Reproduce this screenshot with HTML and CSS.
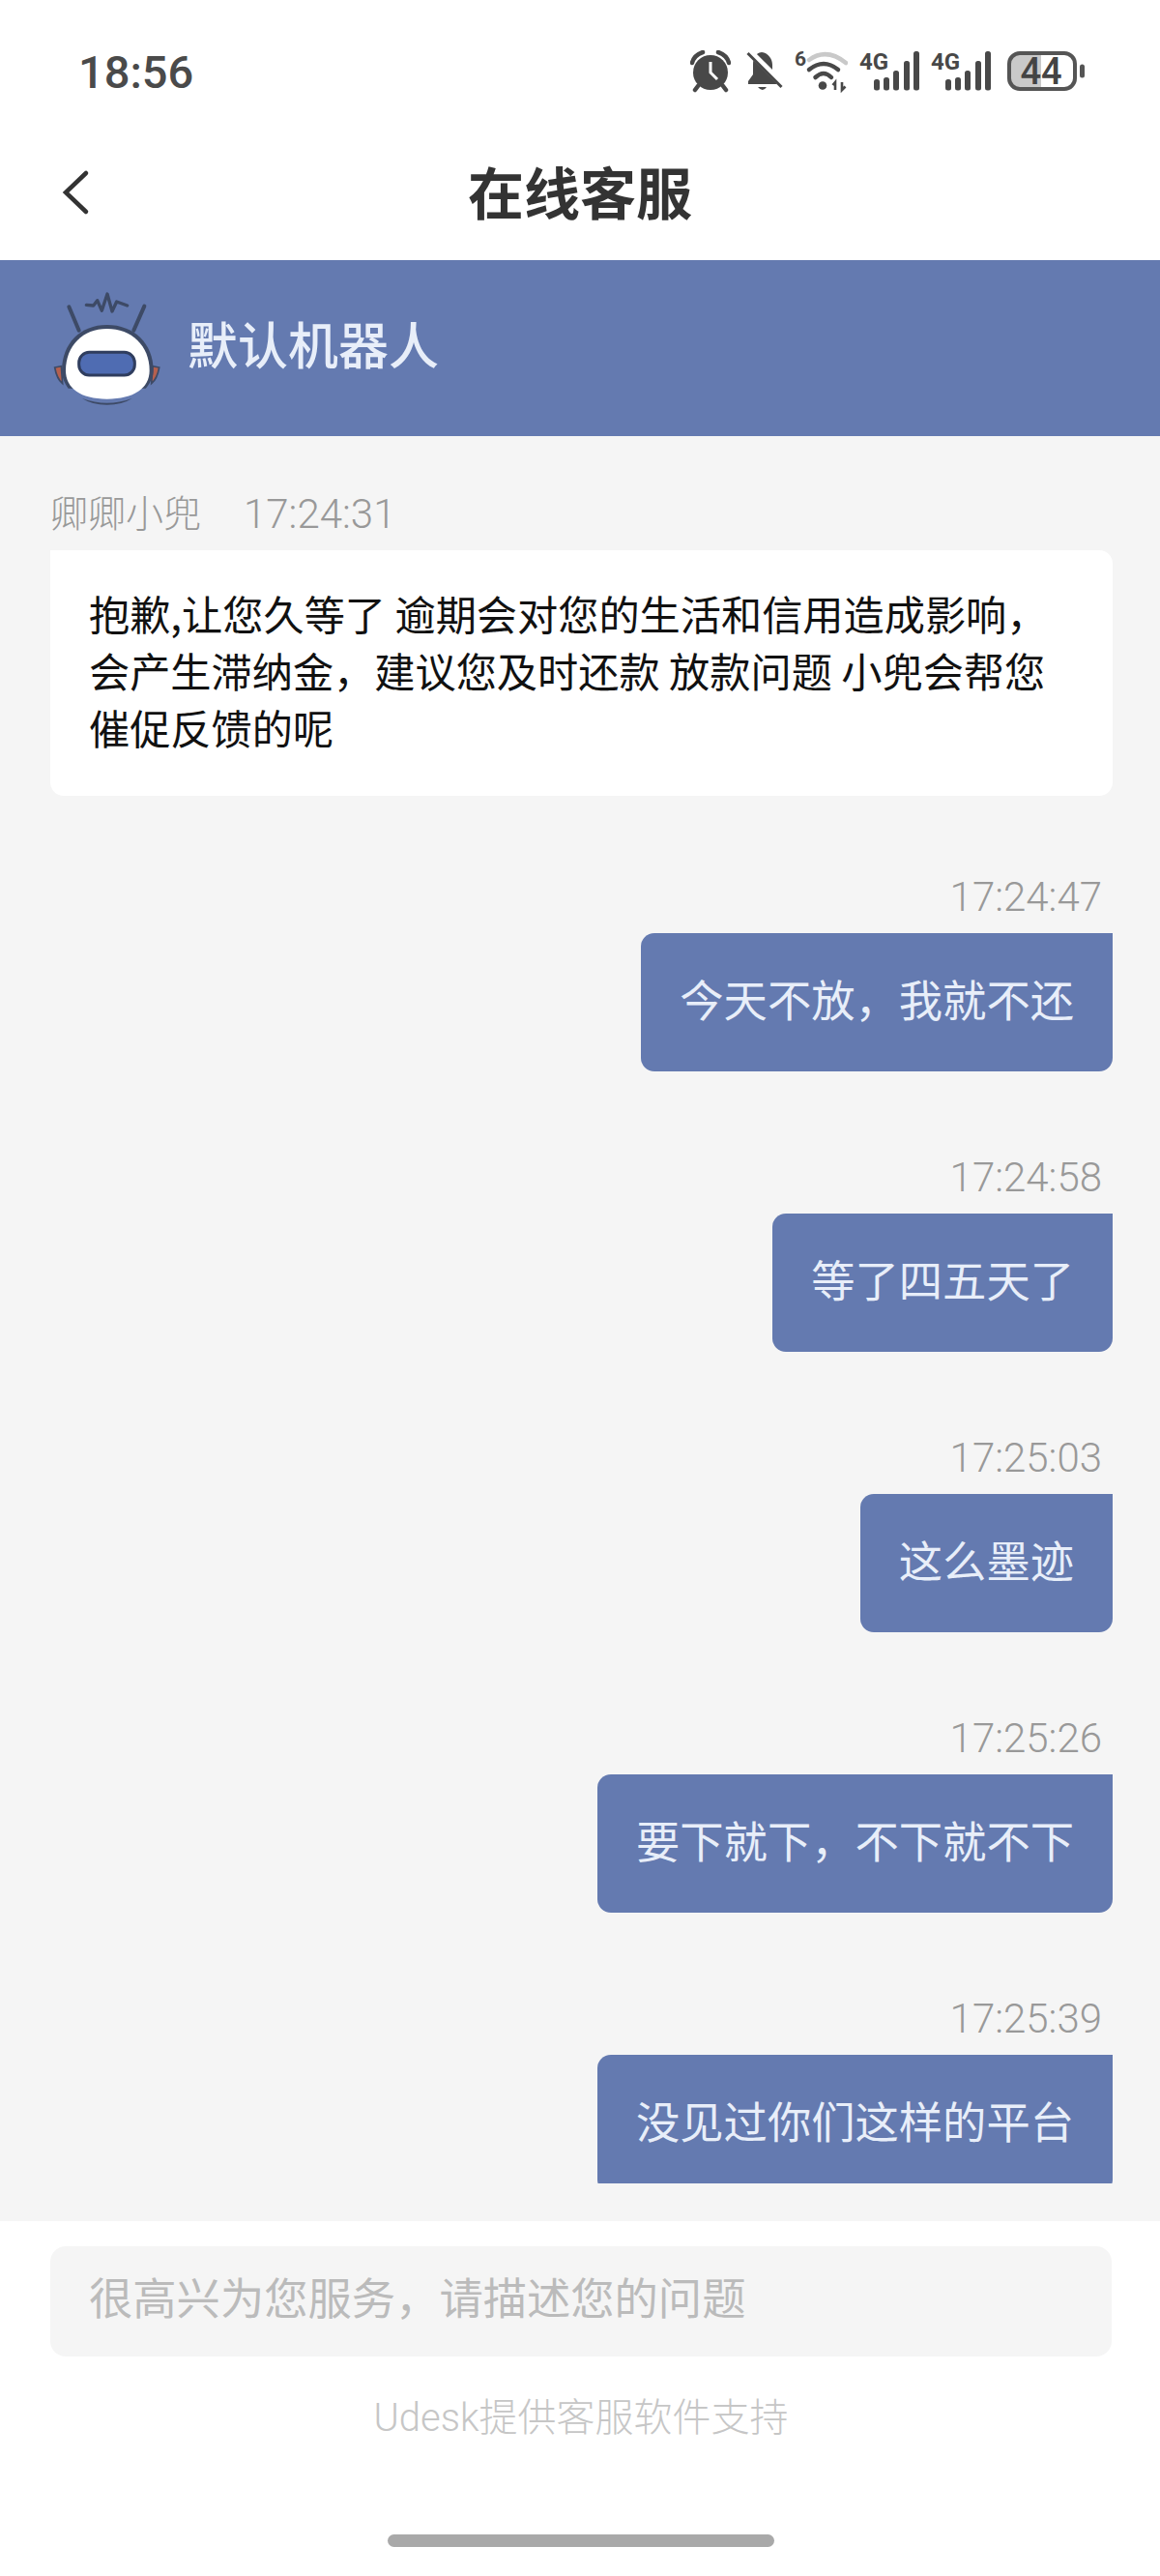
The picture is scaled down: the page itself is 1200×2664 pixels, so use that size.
FILE: index.html
```html
<!DOCTYPE html>
<html lang="zh-CN">

<head>
    <meta charset="UTF-8">
    <title>在线客服</title>
    <link rel="stylesheet" href="styles.css">
</head>

<body>
<div class="app">
    <div class="status">
        <span class="clock">18:56</span>
        <div class="status-icons">
            <svg class="ic-alarm" width="42" height="44" viewBox="0 0 42 44">
                <circle cx="21" cy="23" r="18" fill="#484848"/>
                <path d="M2 13 Q4 5 13 2 M40 13 Q38 5 29 2 M8 37 L5 41 M34 37 L37 41" fill="none" stroke="#484848" stroke-width="4.500" stroke-linecap="round"/>
                <path d="M21 12 V23 L28 30" fill="none" stroke="#fff" stroke-width="3"/>
            </svg>
            <svg class="ic-bell" width="38" height="44" viewBox="0 0 38 44">
                <path d="M16 2 C9 3 7 9 7 15 V25 L2 32 V35 H31 V32 L27 25 V15 C27 9 23 3 16 2 Z" fill="#484848"/>
                <path d="M12 38 H21 Q17 44 12 38 Z" fill="#484848"/>
                <path d="M3 1 L38 36" stroke="#fff" stroke-width="7"/>
                <path d="M1.500 3 L36.500 38" stroke="#484848" stroke-width="3"/>
            </svg>
            <svg class="ic-wifi" width="55" height="56" viewBox="0 -6 55 56">
                <text x="0" y="16" class="ic-label-small">6</text>
                <path d="M15 10 Q33 -3 53 13" fill="none" stroke="#c9c9c9" stroke-width="4.500" stroke-linecap="round"/>
                <path d="M15 20 Q30 8 45 20" fill="none" stroke="#484848" stroke-width="4.500" stroke-linecap="round"/>
                <path d="M21.500 28 Q30 20 38 28" fill="none" stroke="#484848" stroke-width="4.500" stroke-linecap="round"/>
                <circle cx="29" cy="36.500" r="4.300" fill="#484848"/>
                <path d="M42 41 V33 L39.500 36 M49 33 V41 L52.500 37.500" fill="none" stroke="#484848" stroke-width="2.600"/>
            </svg>
            <svg class="ic-signal" width="62" height="56" viewBox="0 -6 62 56">
                <text x="0" y="20" class="ic-label">4G</text>
                <rect x="15" y="30" width="6" height="11.500" rx="2.500" fill="#484848"/>
                <rect x="25" y="28" width="6" height="13.500" rx="2.500" fill="#484848"/>
                <rect x="35" y="21" width="6" height="20.500" rx="2.500" fill="#484848"/>
                <rect x="46" y="11" width="6" height="30.500" rx="2.500" fill="#484848"/>
                <rect x="56" y="1" width="6" height="40.500" rx="2.500" fill="#484848"/>
            </svg>
            <svg class="ic-signal" width="62" height="56" viewBox="0 -6 62 56">
                <text x="0" y="20" class="ic-label">4G</text>
                <rect x="15" y="30" width="6" height="11.500" rx="2.500" fill="#484848"/>
                <rect x="25" y="28" width="6" height="13.500" rx="2.500" fill="#484848"/>
                <rect x="35" y="21" width="6" height="20.500" rx="2.500" fill="#484848"/>
                <rect x="46" y="11" width="6" height="30.500" rx="2.500" fill="#484848"/>
                <rect x="56" y="1" width="6" height="40.500" rx="2.500" fill="#484848"/>
            </svg>
            <svg class="ic-battery" width="80" height="44" viewBox="0 0 80 44">
                <path d="M35 3 H13 Q2 3 2 14 V29 Q2 40 13 40 H35 Z" fill="#c9c9c9"/>
                <rect x="2" y="3" width="68" height="37" rx="11" fill="none" stroke="#555" stroke-width="4"/>
                <rect x="75" y="14.500" width="5" height="14" rx="2.500" fill="#555"/>
                <text x="35" y="35" text-anchor="middle" class="ic-percent">44</text>
            </svg>
        </div>
    </div>

    <div class="nav">
        <svg class="back" width="40" height="60" viewBox="0 0 40 60">
            <path d="M29 9 L8 29 L29 49" fill="none" stroke="#333" stroke-width="4.500" stroke-linecap="round"/>
        </svg>
        <span class="nav-title">在线客服</span>
    </div>

    <div class="agent">
        <svg class="avatar" width="160" height="160" viewBox="0 0 480 480">
            <path d="M80 300 L100 296 L104 350 Q86 335 80 300 Z" fill="#b5604f" stroke="#3d4a66" stroke-width="5"/>
            <path d="M404 300 L384 296 L380 350 Q398 335 404 300 Z" fill="#b5604f" stroke="#3d4a66" stroke-width="5"/>
            <path d="M155 185 L124 112 M325 185 L358 110" stroke="#3d4a66" stroke-width="12" stroke-linecap="round"/>
            <path d="M178 106 L200 108 L212 92 L226 124 L243 72 L258 126 L272 96 L305 108" fill="none" stroke="#3d4a66" stroke-width="10" stroke-linejoin="round" stroke-linecap="round"/>
            <path d="M242 168 C160 168 102 225 102 310 C102 330 110 350 122 365 L362 365 C376 350 386 330 386 310 C386 225 325 168 242 168 Z" fill="#3d4a66"/>
            <path d="M242 180 C168 180 114 232 114 310 C114 365 160 398 242 398 C325 398 374 365 374 310 C374 232 318 180 242 180 Z" fill="#fff"/>
            <path d="M165 396 Q242 425 320 396 Q290 416 242 416 Q195 416 165 396 Z" fill="#3d4a66"/>
            <rect x="155" y="253" width="173" height="71" rx="32" fill="#4f6cb2" stroke="#2f3d5e" stroke-width="9"/>
        </svg>
        <span class="agent-name">默认机器人</span>
    </div>

    <div class="chat">
        <div class="chat-scroll">
            <div class="msg msg-in">
                <div class="meta"><span class="meta-name">卿卿小兜</span><span>17:24:31</span></div>
                <div class="bubble">抱歉,让您久等了 逾期会对您的生活和信用造成影响，会产生滞纳金，建议您及时还款 放款问题 小兜会帮您催促反馈的呢</div>
            </div>
            <div class="msg msg-out">
                <div class="meta">17:24:47</div>
                <div class="bubble">今天不放，我就不还</div>
            </div>
            <div class="msg msg-out">
                <div class="meta">17:24:58</div>
                <div class="bubble">等了四五天了</div>
            </div>
            <div class="msg msg-out">
                <div class="meta">17:25:03</div>
                <div class="bubble">这么墨迹</div>
            </div>
            <div class="msg msg-out">
                <div class="meta">17:25:26</div>
                <div class="bubble">要下就下，不下就不下</div>
            </div>
            <div class="msg msg-out">
                <div class="meta">17:25:39</div>
                <div class="bubble">没见过你们这样的平台</div>
            </div>
        </div>
    </div>

    <div class="footer">
        <input class="ask" type="text" placeholder="很高兴为您服务，请描述您的问题">
        <div class="powered">Udesk提供客服软件支持</div>
        <div class="home-bar"></div>
    </div>
</div>
</body>
</html>
```

FILE: styles.css
```css
html, body {
    margin: 0;
    padding: 0;
}
body {
    background-color: #FFFFFF;
    font-family: Roboto, "Noto Sans CJK SC", sans-serif;
}
.app {
    width: 1200px;
    height: 2664px;
    display: flex;
    flex-direction: column;
    overflow: hidden;
}

/* status bar */
.status {
    height: 112px;
    padding: 18px 78px 0 81px;
    display: flex;
    align-items: center;
    justify-content: space-between;
}
.clock {
    font-size: 47px;
    font-weight: 500;
    color: #4A4A4A;
}
.status-icons {
    display: flex;
    align-items: center;
}
.ic-alarm { margin-right: 16px; }
.ic-bell { margin-right: 12px; }
.ic-wifi { margin-right: 12px; }
.ic-signal { margin-right: 12px; }
.ic-signal + .ic-battery { margin-left: 5px; }
.ic-label {
    font-family: Roboto, sans-serif;
    font-size: 24px;
    font-weight: 700;
    fill: #484848;
}
.ic-label-small {
    font-family: Roboto, sans-serif;
    font-size: 21px;
    font-weight: 700;
    fill: #484848;
}
.ic-percent {
    font-family: Roboto, sans-serif;
    font-size: 38px;
    font-weight: 500;
    fill: #444444;
}

/* title */
.nav {
    height: 133px;
    padding-bottom: 6px;
    position: relative;
    display: flex;
    align-items: center;
    justify-content: center;
}
.back {
    position: absolute;
    left: 60px;
    top: 40px;
}
.nav-title {
    font-size: 58px;
    font-weight: 700;
    color: #333333;
}

/* robot band */
.agent {
    height: 182px;
    padding-left: 30px;
    display: flex;
    align-items: center;
    gap: 4px;
    background-color: #647AB0;
}
.agent-name {
    font-size: 52px;
    font-weight: 500;
    color: #E8EEF9;
    position: relative;
    top: -6px;
}

/* messages */
.chat {
    height: 1846px;
    padding-bottom: 39px;
    box-sizing: border-box;
    background-color: #F5F5F5;
}
.chat-scroll {
    height: 1807px;
    overflow: hidden;
    padding: 57px 49px 0 52px;
    box-sizing: border-box;
}
.msg {
    display: flex;
    flex-direction: column;
    margin-bottom: 86px;
}
.msg-in {
    align-items: stretch;
    margin-bottom: 81px;
}
.msg-out {
    align-items: flex-end;
}
.meta {
    display: flex;
    align-items: center;
    height: 48px;
    font-size: 42px;
    font-weight: 300;
    line-height: 48px;
    color: #999999;
    margin-bottom: 13px;
    padding-right: 11px;
}
.meta-name {
    margin-right: 44px;
    font-size: 39px;
}
.bubble {
    font-family: "Noto Sans CJK SC", sans-serif;
    font-size: 45.3px;
    line-height: 59px;
}
.msg-in .bubble {
    padding: 35px 40px 42px;
    font-size: 42.2px;
    background-color: #FFFFFF;
    color: #111111;
    border-radius: 0 14px 14px 14px;
}
.msg-out .bubble {
    padding: 38px 40px 46px;
    background-color: #647AB0;
    color: #E8EEF9;
    border-radius: 14px 0 14px 14px;
}

/* bottom */
.footer {
    flex: 1;
    padding: 26px 50px 0 52px;
    display: flex;
    flex-direction: column;
    align-items: center;
    background-color: #FFFFFF;
}
.ask {
    width: 100%;
    height: 114px;
    padding: 0 40px 12px;
    box-sizing: border-box;
    border: 0;
    border-radius: 16px;
    background-color: #F5F5F5;
    font-family: "Noto Sans CJK SC", sans-serif;
    font-size: 45.3px;
}
.ask::placeholder {
    color: #BBBBBB;
}
.powered {
    margin-top: 40px;
    font-size: 40px;
    line-height: 48px;
    font-weight: 300;
    color: #C6C6C6;
}
.home-bar {
    width: 400px;
    height: 13px;
    margin-top: 96px;
    border-radius: 7px;
    background-color: #A9A9A9;
}
```
